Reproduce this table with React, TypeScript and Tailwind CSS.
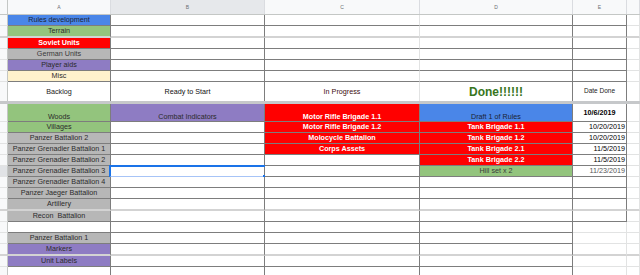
type Cell = {
  t?: string;
  bg?: string;
  tc?: string;
  right?: boolean;
  bottom?: boolean;
  extra?: string;
};

type Row = {
  h: string;
  kind: "top" | "head" | "low";
  thick?: boolean;
  eBox?: boolean;
  sel?: boolean;
  cells: Cell[];
};

const GRID = "grid grid-cols-[8px_103px_154px_155px_153px_54px_1fr]";

const R_DARK = "border-r border-r-[#7d7d7d]";
const R_LIGHT = "border-r border-r-[#e2e3e3]";
const B_DARK = "border-b border-b-[#7d7d7d]";
const B_LIGHT = "border-b border-b-[#e2e3e3]";
const B_THICK = "border-b-2 border-b-[#d3d3d3]";

const BLUE = "bg-[#4a86e8]";
const GREEN = "bg-[#93c47d]";
const RED = "bg-[#ff0000]";
const GREY = "bg-[#b7b7b7]";
const PURPLE = "bg-[#8e7cc3]";
const CREAM = "bg-[#fff2cc]";

const WHITE_B = "text-white font-bold";
const DARK = "text-[#2b2b2b]";

const rows: Row[] = [
  { h: "h-[11px]", kind: "top", cells: [{ t: "Rules development", bg: BLUE, tc: "text-[#1b2433]" }] },
  { h: "h-[12px]", kind: "top", thick: true, cells: [{ t: "Terrain", bg: GREEN, tc: DARK }] },
  { h: "h-[11px]", kind: "top", cells: [{ t: "Soviet Units", bg: RED, tc: WHITE_B }] },
  { h: "h-[11px]", kind: "top", cells: [{ t: "German Units", bg: GREY, tc: "text-[#3a3a3a]" }] },
  { h: "h-[11px]", kind: "top", cells: [{ t: "Player aids", bg: PURPLE, tc: DARK }] },
  { h: "h-[11px]", kind: "top", cells: [{ t: "Misc", bg: CREAM, tc: DARK }] },
  {
    h: "h-[19px]",
    kind: "head",
    cells: [
      { t: "Backlog", tc: "text-[#222]" },
      { t: "Ready to Start", tc: "text-[#111]" },
      { t: "In Progress", tc: "text-[#3d0d0d]" },
      { t: "Done!!!!!!", tc: "text-[#38761d] font-bold text-[12px]" },
      { t: "Date Done", tc: "text-[#222] text-[6.5px]" },
    ],
  },
];

const low: Row[] = [
  {
    h: "h-[18px]",
    kind: "low",
    eBox: true,
    cells: [
      { t: "Woods", bg: GREEN, tc: DARK, extra: "items-end pb-[1px]" },
      { t: "Combat Indicators", bg: PURPLE, tc: DARK, extra: "items-end pb-[1px]" },
      { t: "Motor Rifle Brigade 1.1", bg: RED, tc: WHITE_B, extra: "items-end pb-[1px]" },
      { t: "Draft 1 of Rules", bg: BLUE, tc: "text-[#1b2433]", extra: "items-end pb-[1px]" },
      { t: "10/6/2019", tc: "text-black font-bold" },
    ],
  },
  {
    h: "h-[11px]",
    kind: "low",
    eBox: true,
    cells: [
      { t: "Villages", bg: GREEN, tc: DARK },
      {},
      { t: "Motor Rifle Brigade 1.2", bg: RED, tc: WHITE_B },
      { t: "Tank Brigade 1.1", bg: RED, tc: WHITE_B },
      { t: "10/20/2019", tc: "text-black", right: true },
    ],
  },
  {
    h: "h-[11px]",
    kind: "low",
    eBox: true,
    cells: [
      { t: "Panzer Battalion 2", bg: GREY, tc: DARK },
      {},
      { t: "Molocycle Battalion", bg: RED, tc: WHITE_B },
      { t: "Tank Brigade 1.2", bg: RED, tc: WHITE_B },
      { t: "10/20/2019", tc: "text-black", right: true },
    ],
  },
  {
    h: "h-[11px]",
    kind: "low",
    eBox: true,
    cells: [
      { t: "Panzer Grenadier Battalion 1", bg: GREY, tc: DARK },
      {},
      { t: "Corps Assets", bg: RED, tc: WHITE_B },
      { t: "Tank Brigade 2.1", bg: RED, tc: WHITE_B },
      { t: "11/5/2019", tc: "text-black", right: true },
    ],
  },
  {
    h: "h-[11px]",
    kind: "low",
    eBox: true,
    cells: [
      { t: "Panzer Grenadier Battalion 2", bg: GREY, tc: DARK },
      {},
      {},
      { t: "Tank Brigade 2.2", bg: RED, tc: WHITE_B },
      { t: "11/5/2019", tc: "text-black", right: true },
    ],
  },
  {
    h: "h-[11px]",
    kind: "low",
    eBox: true,
    sel: true,
    cells: [
      { t: "Panzer Grenadier Battalion 3", bg: GREY, tc: DARK },
      {},
      {},
      { t: "Hill set x 2", bg: GREEN, tc: "text-[#3a3a3a]" },
      { t: "11/23/2019", tc: "text-[#555]", right: true },
    ],
  },
  { h: "h-[11px]", kind: "low", eBox: true, cells: [{ t: "Panzer Grenadier Battalion 4", bg: GREY, tc: DARK }] },
  { h: "h-[11px]", kind: "low", eBox: true, cells: [{ t: "Panzer Jaeger Battalion", bg: GREY, tc: DARK }] },
  { h: "h-[12px]", kind: "low", eBox: true, thick: true, cells: [{ t: "Artillery", bg: GREY, tc: DARK }] },
  { h: "h-[11px]", kind: "low", eBox: true, cells: [{ t: "Recon  Battalion", bg: GREY, tc: DARK }] },
  { h: "h-[11px]", kind: "low", cells: [{}] },
  { h: "h-[11px]", kind: "low", cells: [{ t: "Panzer Battalion 1", bg: GREY, tc: DARK }] },
  { h: "h-[12px]", kind: "low", thick: true, cells: [{ t: "Markers", bg: PURPLE, tc: DARK }] },
  { h: "h-[11px]", kind: "low", cells: [{ t: "Unit Labels", bg: PURPLE, tc: DARK }] },
  { h: "h-[11px]", kind: "low", cells: [{}] },
];

function SheetRow({ row }: { row: Row }) {
  const bottomFor = (dark: boolean) => (row.thick ? B_THICK : dark ? B_DARK : B_LIGHT);
  const head = row.kind === "head";
  const cells = [0, 1, 2, 3, 4].map((i) => row.cells[i] ?? {});

  return (
    <div className={`${GRID} ${row.h}`}>
      <div className={`${row.sel ? "bg-[#e1e3e6]" : "bg-[#f8f9fa]"} border-r border-r-[#c4c7c5] ${head ? "" : bottomFor(false)}`} />
      {cells.map((c, i) => {
        let rightB = R_DARK;
        let bottomDark = true;
        if (row.kind !== "low" && i === 2) rightB = R_LIGHT;
        if (row.kind === "low" && i === 4 && !row.eBox) {
          rightB = R_LIGHT;
          bottomDark = false;
        }
        const align = c.right ? "justify-end pr-[1px]" : "justify-center";
        return (
          <div
            key={i}
            className={`relative flex items-center whitespace-pre overflow-visible ${align} ${c.bg ?? "bg-white"} ${c.tc ?? DARK} ${rightB} ${head ? "" : bottomFor(bottomDark)} ${c.extra ?? ""}`}
          >
            {c.t}
            {row.sel && i === 1 && (
              <div className="absolute -top-px -left-[2px] -right-px -bottom-[2px] border-t-2 border-l-2 border-t-[#1a73e8] border-l-[#1a73e8] border-b-2 border-b-[#a7c4f7]">
                <div className="absolute -right-[2px] -bottom-[3px] w-[4px] h-[4px] bg-[#1a73e8]" />
              </div>
            )}
          </div>
        );
      })}
      <div className={`bg-white ${R_LIGHT} ${head ? "" : bottomFor(false)}`} />
    </div>
  );
}

export default function App() {
  const letters = ["A", "B", "C", "D", "E", ""];
  return (
    <div className="w-[640px] h-[275px] overflow-hidden bg-white font-['Liberation_Sans',Arial,sans-serif] text-[7.2px] leading-none">
      <div className={`${GRID} h-[15px] border-b border-b-[#c4c7c5]`}>
        <div className="bg-[#f8f9fa] border-r border-r-[#c4c7c5]" />
        {letters.map((l, i) => (
          <div
            key={i}
            className={`flex items-center justify-center text-[5px] text-[#6b6f73] border-r border-r-[#dadce0] ${i === 1 ? "bg-[#e6e8eb]" : "bg-[#f8f9fa]"}`}
          >
            {l}
          </div>
        ))}
      </div>
      {rows.map((r, i) => (
        <SheetRow key={i} row={r} />
      ))}
      <div className="h-[3px] bg-[#c6c8ca]" />
      {low.map((r, i) => (
        <SheetRow key={i} row={r} />
      ))}
    </div>
  );
}
